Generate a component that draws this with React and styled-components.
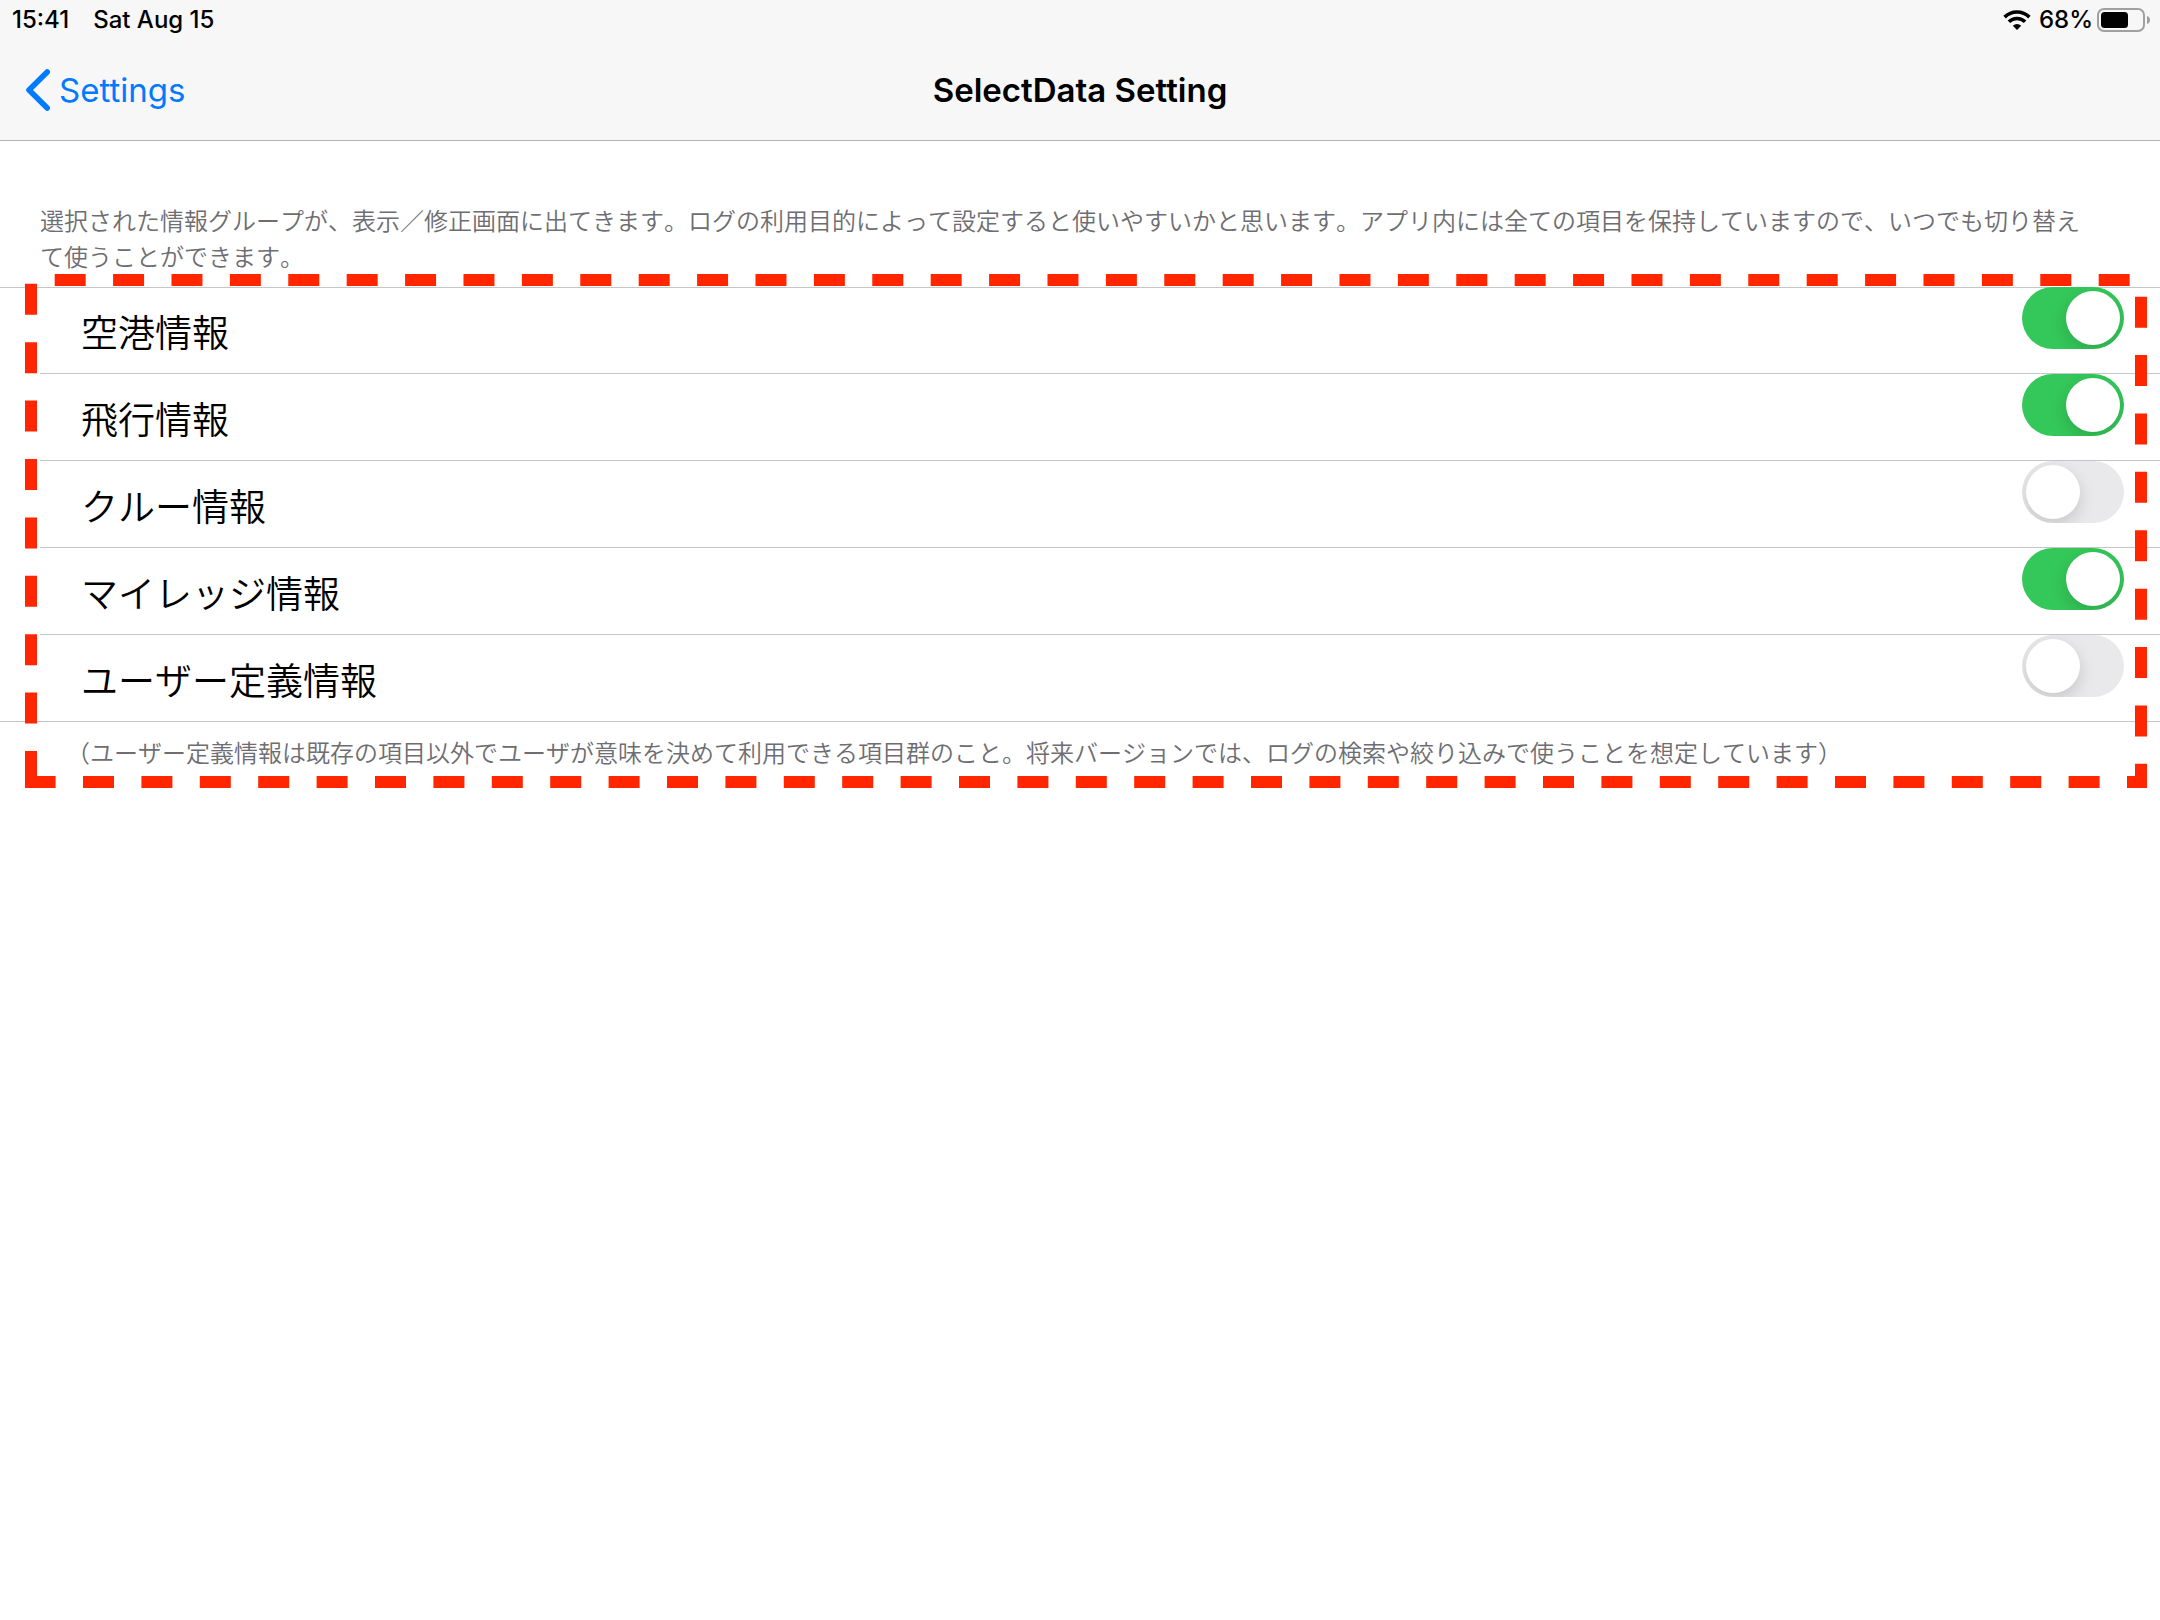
import React, { useState } from "react";
import styled, { createGlobalStyle } from "styled-components";

const latin = `Inter, "Noto Sans CJK JP", sans-serif`;
const japanese = `"Noto Sans CJK JP", "Noto Sans", sans-serif`;

const GlobalStyle = createGlobalStyle`
  *, *::before, *::after { box-sizing: border-box; }
  body {
    margin: 0;
    background: #fff;
    color: #000;
    font-family: ${latin};
  }
`;

const Page = styled.div`
  min-height: 100vh;
`;

const Header = styled.header`
  background: #f7f7f7;
  border-bottom: 1px solid #b2b2b2;
`;

const StatusBar = styled.div`
  display: flex;
  align-items: center;
  justify-content: space-between;
  height: 40px;
  padding: 0 9px 0 12px;
  font-size: 24px;
  font-weight: 500;
  line-height: 40px;
`;

const StatusGroup = styled.div`
  display: flex;
  align-items: center;
  gap: ${(p) => p.$gap}px;
`;

const NavBar = styled.nav`
  display: grid;
  grid-template-columns: 1fr auto 1fr;
  align-items: center;
  height: 100px;
  padding: 0 24px;
  font-size: 33px;
  line-height: 40px;
`;

const BackButton = styled.button`
  display: flex;
  align-items: center;
  justify-self: start;
  gap: 7px;
  padding: 0;
  border: 0;
  background: none;
  color: #007aff;
  font: inherit;
  cursor: pointer;
`;

const Title = styled.h1`
  margin: 0;
  font-size: 33px;
  font-weight: 600;
  line-height: 40px;
`;

const Note = styled.p`
  margin: 0;
  color: #6d6d72;
  font-family: ${japanese};
  font-size: 24px;
  font-weight: 350;
  font-kerning: none;
  line-height: 36px;
`;

const Intro = styled(Note)`
  padding: 61px 60px 13px 40px;
`;

const Footnote = styled(Note)`
  padding: 12px 60px 0 66px;
`;

const Group = styled.section`
  position: relative;
  padding-bottom: 18px;
`;

const List = styled.ul`
  margin: 0;
  padding: 0 0 0 40px;
  list-style: none;
  border-bottom: 1px solid #c6c6c8;
  box-shadow: inset 0 1px #c6c6c8;
`;

const Row = styled.li`
  display: flex;
  align-items: flex-start;
  justify-content: space-between;
  height: 87px;
  padding: 0 36px 0 41px;
  border-bottom: 1px solid #c6c6c8;

  &:last-child {
    height: 86px;
    border-bottom: 0;
  }
`;

const RowLabel = styled.label`
  flex: 1;
  padding-top: 3px;
  font-family: ${japanese};
  font-size: 37px;
  font-weight: 350;
  font-kerning: none;
  line-height: 82px;
`;

const Switch = styled.input`
  appearance: none;
  display: flex;
  width: 102px;
  height: 62px;
  margin: 0;
  padding: 4px;
  overflow: hidden;
  border-radius: 31px;
  background: #e9e9eb;
  cursor: pointer;

  &::before {
    content: "";
    width: 54px;
    height: 54px;
    border-radius: 50%;
    background: #fff;
    box-shadow: 0 6px 16px rgba(0, 0, 0, 0.15);
  }

  &:checked {
    justify-content: flex-end;
    background: #34c759;
  }
`;

const Highlight = styled.svg`
  position: absolute;
  top: -13px;
  left: 25px;
  width: calc(100% - 38px);
  height: 514px;
  overflow: hidden;
  pointer-events: none;
`;

const WifiIcon = () => (
  <svg width="28" height="20" viewBox="0 0 28 20" aria-hidden="true">
    <g fill="none" stroke="#000" strokeWidth="3.6">
      <path d="M1.600 7.100a17.600 17.600 0 0 1 24.800 0" />
      <path d="M5.900 11.800a11.500 11.500 0 0 1 16.200 0" />
    </g>
    <path d="M9.800 15.800a6 6 0 0 1 8.400 0L14 20z" fill="#000" />
  </svg>
);

const BatteryIcon = () => (
  <svg width="54" height="24" viewBox="0 0 54 24" aria-hidden="true">
    <rect x="1" y="1" width="46" height="22" rx="6" fill="none" stroke="#a0a0a0" strokeWidth="2" />
    <rect x="4" y="4" width="27" height="16" rx="3.500" fill="#000" />
    <path d="M50 8c2 .6 3 2 3 4s-1 3.400-3 4z" fill="#a0a0a0" />
  </svg>
);

const ChevronLeft = () => (
  <svg width="28" height="44" viewBox="0 0 28 44" aria-hidden="true">
    <path
      d="M23.200 4 5 22l18.200 18"
      fill="none"
      stroke="currentColor"
      strokeWidth="5.600"
      strokeLinecap="round"
      strokeLinejoin="round"
    />
  </svg>
);

const DashedFrame = () => (
  <Highlight aria-hidden="true">
    <g stroke="#ff2600" strokeWidth="12" strokeDasharray="31 27.4">
      <line x1="6" y1="508" x2="6" y2="6" />
      <line x1="6" y1="6" x2="100%" y2="6" strokeDashoffset="34.72" />
      <g transform="translate(-6 0)">
        <line x1="100%" y1="6" x2="100%" y2="514" strokeDashoffset="41.740" />
      </g>
      <g transform="translate(-6 0)">
        <line x1="100%" y1="508" x2="0" y2="508" strokeDashoffset="17" />
      </g>
      <rect x="0" y="502" width="12" height="12" fill="#ff2600" stroke="none" />
    </g>
  </Highlight>
);

const groups = [
  { id: "airport", label: "空港情報", on: true },
  { id: "flight", label: "飛行情報", on: true },
  { id: "crew", label: "クルー情報", on: false },
  { id: "mileage", label: "マイレッジ情報", on: true },
  { id: "custom", label: "ユーザー定義情報", on: false },
];

const SettingRow = ({ id, label, on }) => {
  const [checked, setChecked] = useState(on);
  return (
    <Row>
      <RowLabel htmlFor={id}>{label}</RowLabel>
      <Switch
        id={id}
        type="checkbox"
        role="switch"
        checked={checked}
        onChange={(e) => setChecked(e.target.checked)}
      />
    </Row>
  );
};

export default function App() {
  return (
    <Page>
      <GlobalStyle />
      <Header>
        <StatusBar>
          <StatusGroup $gap={24}>
            <span>15:41</span>
            <span>Sat Aug 15</span>
          </StatusGroup>
          <StatusGroup $gap={8}>
            <WifiIcon />
            <StatusGroup $gap={4}>
              <span>68%</span>
              <BatteryIcon />
            </StatusGroup>
          </StatusGroup>
        </StatusBar>
        <NavBar>
          <BackButton type="button">
            <ChevronLeft />
            Settings
          </BackButton>
          <Title>SelectData Setting</Title>
        </NavBar>
      </Header>
      <main>
        <Intro>
          選択された情報グループが、表示／修正画面に出てきます。ログの利用目的によって設定すると使いやすいかと思います。アプリ内には全ての項目を保持していますので、いつでも切り替えて使うことができます。
        </Intro>
        <Group>
          <List>
            {groups.map((group) => (
              <SettingRow key={group.id} {...group} />
            ))}
          </List>
          <Footnote>
            （ユーザー定義情報は既存の項目以外でユーザが意味を決めて利用できる項目群のこと。将来バージョンでは、ログの検索や絞り込みで使うことを想定しています）
          </Footnote>
          <DashedFrame />
        </Group>
      </main>
    </Page>
  );
}
